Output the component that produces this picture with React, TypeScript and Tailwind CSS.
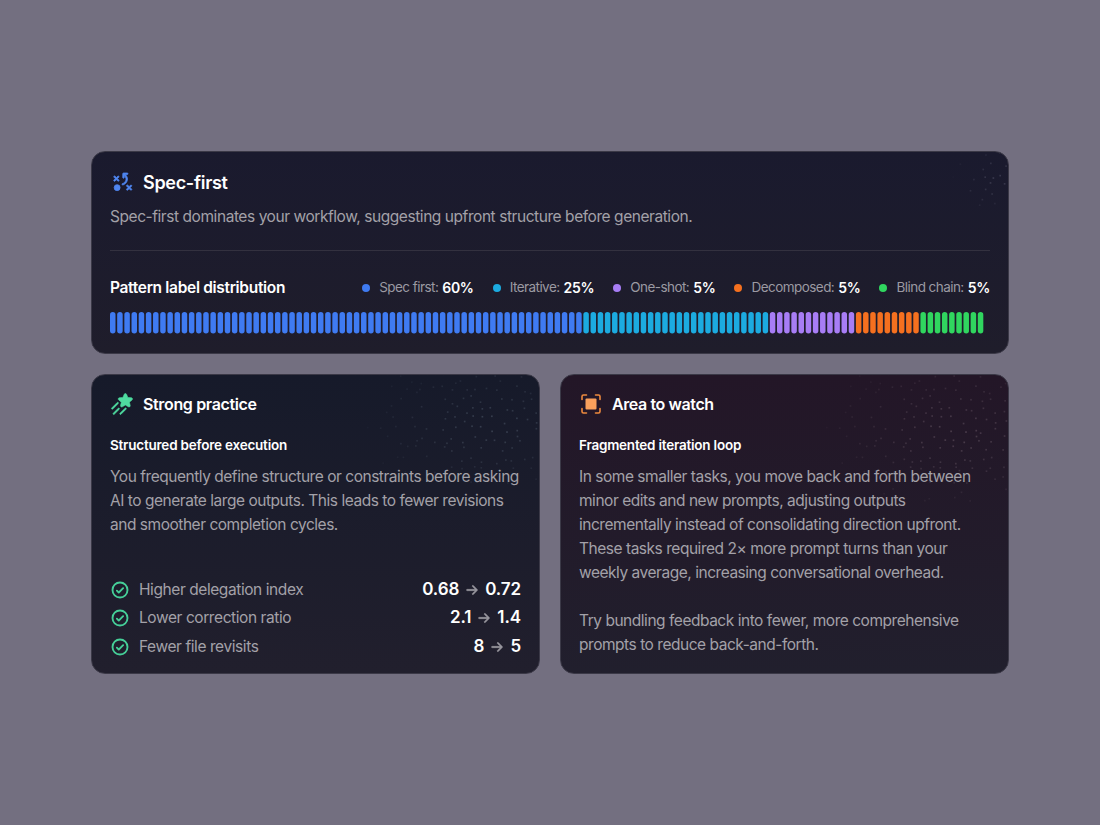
import { PiArrowRightBold, PiCheckCircleBold, PiShootingStarFill, PiStrategyFill } from "react-icons/pi";

const bars = [
  { count: 66, color: "#3f7bf2" },
  { count: 26, color: "#1cabe0" },
  { count: 12, color: "#a77df5" },
  { count: 9, color: "#f5701f" },
  { count: 9, color: "#30d65f" },
];

const legend = [
  { label: "Spec first:", value: "60%", dot: "bg-[#3f7bf2]" },
  { label: "Iterative:", value: "25%", dot: "bg-[#1cabe0]" },
  { label: "One-shot:", value: "5%", dot: "bg-[#a77df5]" },
  { label: "Decomposed:", value: "5%", dot: "bg-[#f5701f]" },
  { label: "Blind chain:", value: "5%", dot: "bg-[#30d65f]" },
];

const metrics = [
  { label: "Higher delegation index", from: "0.68", to: "0.72" },
  { label: "Lower correction ratio", from: "2.1", to: "1.4" },
  { label: "Fewer file revisits", from: "8", to: "5" },
];

// speckle in the card corners, fades out away from the middle of the patch
const Dots = ({ width, height, color, opacity }: { width: number; height: number; color: string; opacity: number }) => {
  const dots: { x: number; y: number; o: number }[] = [];
  const step = 10;
  for (let row = 0; row < height / step; row++) {
    for (let col = 0; col < width / step; col++) {
      const n = Math.abs(Math.sin(row * 12.9898 + col * 78.233) * 43758.5453) % 1;
      const m = Math.abs(Math.sin(row * 39.346 + col * 11.135) * 24634.6345) % 1;
      const k = Math.abs(Math.sin(row * 93.989 + col * 67.345) * 35412.1234) % 1;
      const dx = (col * step - width * 0.72) / (width * 0.8);
      const dy = (row * step - height * 0.4) / (height * 0.7);
      const fade = Math.max(0, 1 - Math.sqrt(dx * dx + dy * dy));
      if (n < fade * 1.2) {
        dots.push({ x: col * step + m * 8, y: row * step + k * 8, o: fade });
      }
    }
  }
  return (
    <svg className="absolute top-0 right-0 pointer-events-none" width={width} height={height}>
      {dots.map((d, i) => (
        <rect key={i} x={d.x} y={d.y} width="1.7" height="1.7" fill={color} opacity={d.o * opacity} />
      ))}
    </svg>
  );
};

const FocusIcon = () => (
  <svg width="20" height="20" viewBox="0 0 20 20" fill="none">
    <rect x="4.5" y="4.5" width="11" height="11" rx="1" fill="#f9a05c" />
    <path
      d="M1 5.5V2.5A1.5 1.5 0 012.5 1h3M14.5 1h3A1.5 1.5 0 0119 2.5v3M19 14.5v3a1.5 1.5 0 01-1.5 1.5h-3M5.5 19h-3A1.5 1.5 0 011 17.5v-3"
      stroke="#ee8a3e"
      strokeWidth="1.6"
      strokeLinecap="round"
    />
  </svg>
);

const DistributionBars = () => {
  let x = 0;
  return (
    <svg width="880" height="22" className="block">
      {bars.flatMap((b, i) =>
        Array.from({ length: b.count }, (_, j) => {
          const bar = <rect key={`${i}-${j}`} x={x} y="0" width="5.5" height="21.5" rx="2.75" fill={b.color} />;
          x += 7.172;
          return bar;
        })
      )}
    </svg>
  );
};

export default function App() {
  return (
    <div
      className="w-[1100px] h-[825px] bg-[#736f80] flex flex-col gap-[20px] pt-[151px] pl-[91px] text-white"
      style={{ fontFamily: "Inter, 'Noto Sans', sans-serif" }}
    >
      {/* Top card */}
      <div className="relative w-[918px] h-[202.5px] rounded-[14px] border border-[#3b3947] bg-gradient-to-b from-[#1a1a2e] to-[#1f1d2b] px-[18px] pt-[17px] overflow-hidden">
        <Dots width={60} height={60} color="#8c8ca0" opacity={0.3} />
        <div className="flex items-center gap-[9px] h-[26px]">
          <PiStrategyFill size={24} className="text-[#4f86f0] stroke-[8px]" />
          <h2 className="text-[18px] font-semibold tracking-[-0.3px]">Spec-first</h2>
        </div>
        <p className="mt-[10px] text-[15.5px] leading-[24px] tracking-[-0.44px] text-[#a3a1a8]">
          Spec-first dominates your workflow, suggesting upfront structure before generation.
        </p>
        <div className="mt-[21px] h-px bg-[#33313f]" />
        <div className="mt-[25px] flex items-center justify-between h-[24px]">
          <span className="text-[15.5px] font-semibold tracking-[-0.32px]">Pattern label distribution</span>
          <div className="flex items-center gap-[19px] text-[13.5px] pb-[1px]">
            {legend.map((l) => (
              <div key={l.label} className="flex items-center">
                <span className={`w-[8px] h-[8px] rounded-full mr-[9px] ${l.dot}`} />
                <span className="text-[#9b99a2] tracking-[-0.55px]">{l.label}</span>
                <span className="ml-[4px] text-[14px] font-semibold text-white tracking-[-0.3px]">{l.value}</span>
              </div>
            ))}
          </div>
        </div>
        <div className="mt-[12px]">
          <DistributionBars />
        </div>
      </div>

      {/* Bottom cards */}
      <div className="flex gap-[20px] w-[918px]">
        <div className="relative flex-1 h-[300.5px] rounded-[14px] border border-[#3b3947] bg-gradient-to-b from-[#161a2a] to-[#211f2d] px-[18px] pt-[16px] overflow-hidden">
          <Dots width={190} height={115} color="#7d8ea0" opacity={0.32} />
          <div className="flex items-center gap-[9px] h-[26px]">
            <PiShootingStarFill size={24} className="text-[#4fdca0] stroke-[6px]" />
            <h2 className="text-[16px] font-semibold tracking-[-0.35px]">Strong practice</h2>
          </div>
          <h3 className="mt-[18px] text-[13.5px] leading-[20px] font-semibold tracking-[-0.22px]">Structured before execution</h3>
          <p className="mt-[10px] text-[15.5px] leading-[24px] tracking-[-0.47px] text-[#a3a1a8]">
            You frequently define structure or constraints before asking AI to generate large outputs. This leads to fewer revisions and smoother completion cycles.
          </p>
          <div className="mt-[41px] flex flex-col gap-[4.5px]">
            {metrics.map((m) => (
              <div key={m.label} className="flex items-center justify-between h-[24px]">
                <div className="flex items-center gap-[9px]">
                  <PiCheckCircleBold size={20} className="text-[#45cf98]" />
                  <span className="text-[15.5px] tracking-[-0.42px] text-[#a3a1a8]">{m.label}</span>
                </div>
                <div className="flex items-center gap-[6px] text-[17px] font-semibold tracking-[-0.1px]">
                  <span>{m.from}</span>
                  <PiArrowRightBold size={14} className="text-[#98969e] stroke-[10px]" />
                  <span>{m.to}</span>
                </div>
              </div>
            ))}
          </div>
        </div>

        <div className="relative flex-1 h-[300.5px] rounded-[14px] border border-[#3b3947] bg-gradient-to-b from-[#231627] to-[#211f2d] px-[18px] pt-[16px] overflow-hidden">
          <Dots width={200} height={135} color="#a08c98" opacity={0.32} />
          <div className="flex items-center gap-[9px] h-[26px]">
            <div className="w-[24px] flex justify-center">
              <FocusIcon />
            </div>
            <h2 className="text-[16px] font-semibold tracking-[-0.4px]">Area to watch</h2>
          </div>
          <h3 className="mt-[18px] text-[13.5px] leading-[20px] font-semibold tracking-[-0.22px]">Fragmented iteration loop</h3>
          <p className="mt-[10px] text-[15.5px] leading-[24px] tracking-[-0.47px] text-[#a3a1a8]">
            In some smaller tasks, you move back and forth between minor edits and new prompts, adjusting outputs incrementally instead of consolidating direction upfront. These tasks required 2× more prompt turns than your weekly average, increasing conversational overhead.
          </p>
          <p className="mt-[24px] text-[15.5px] leading-[24px] tracking-[-0.47px] text-[#a3a1a8]">
            Try bundling feedback into fewer, more comprehensive prompts to reduce back-and-forth.
          </p>
        </div>
      </div>
    </div>
  );
}
